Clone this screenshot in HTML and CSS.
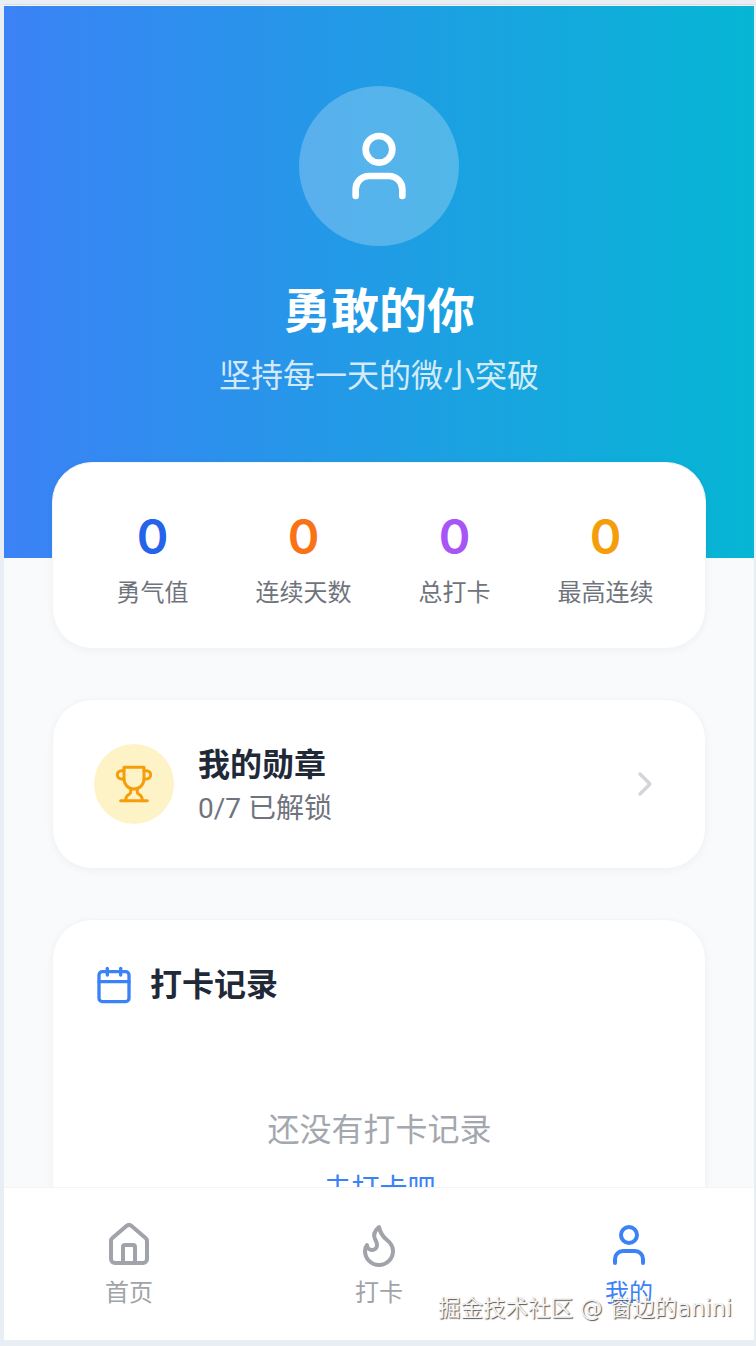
FILE: index.html
```html
<!DOCTYPE html>
<html lang="zh-CN">
<head>
    <meta charset="UTF-8">
    <meta name="viewport" content="width=device-width, initial-scale=1.0">
    <title>我的</title>
    <link rel="stylesheet" href="styles.css">
</head>
<body>
    <div class="phone">
        <div class="scroll">
            <!-- Header -->
            <header class="hero">
                <div class="avatar">
                    <svg class="icon" width="80" height="80" viewBox="0 0 24 24"><path d="M19 21v-2a4 4 0 0 0-4-4H9a4 4 0 0 0-4 4v2"/><circle cx="12" cy="7" r="4"/></svg>
                </div>
                <h1 class="hero-title">勇敢的你</h1>
                <p class="hero-sub">坚持每一天的微小突破</p>
            </header>

            <main class="cards">
                <!-- Stats -->
                <section class="card stats">
                    <div class="stat">
                        <div class="stat-num blue">0</div>
                        <div class="stat-label">勇气值</div>
                    </div>
                    <div class="stat">
                        <div class="stat-num orange">0</div>
                        <div class="stat-label">连续天数</div>
                    </div>
                    <div class="stat">
                        <div class="stat-num purple">0</div>
                        <div class="stat-label">总打卡</div>
                    </div>
                    <div class="stat">
                        <div class="stat-num amber">0</div>
                        <div class="stat-label">最高连续</div>
                    </div>
                </section>

                <!-- Medals -->
                <section class="card medals">
                    <div class="medal-icon">
                        <svg class="icon trophy" width="40" height="40" viewBox="0 0 24 24"><path d="M6 9H4.5a2.5 2.5 0 0 1 0-5H6"/><path d="M18 9h1.5a2.5 2.5 0 0 0 0-5H18"/><path d="M4 22h16"/><path d="M10 14.66V17c0 .55-.47.98-.97 1.21C7.85 18.75 7 20.24 7 22"/><path d="M14 14.66V17c0 .55.47.98.97 1.21C16.15 18.75 17 20.24 17 22"/><path d="M18 2H6v7a6 6 0 0 0 12 0V2Z"/></svg>
                    </div>
                    <div class="medal-text">
                        <div class="medal-title">我的勋章</div>
                        <div class="medal-sub">0/7 已解锁</div>
                    </div>
                    <svg class="icon chevron" width="40" height="40" viewBox="0 0 24 24"><path d="m9 18 6-6-6-6"/></svg>
                </section>

                <!-- Records -->
                <section class="card records">
                    <div class="records-head">
                        <svg class="icon calendar" width="40" height="40" viewBox="0 0 24 24"><path d="M8 2v4"/><path d="M16 2v4"/><rect x="3" y="4" width="18" height="18" rx="2"/><path d="M3 10h18"/></svg>
                        <h2 class="records-title">打卡记录</h2>
                    </div>
                    <div class="empty">
                        <p class="empty-text">还没有打卡记录</p>
                        <a class="empty-link" href="#">去打卡吧</a>
                    </div>
                </section>
            </main>
        </div>

        <!-- Bottom nav -->
        <nav class="tabbar">
            <a class="tab" href="#">
                <svg class="icon" width="48" height="48" viewBox="0 0 24 24"><path d="M15 21v-8a1 1 0 0 0-1-1h-4a1 1 0 0 0-1 1v8"/><path d="M3 10a2 2 0 0 1 .709-1.528l7-5.999a2 2 0 0 1 2.582 0l7 5.999A2 2 0 0 1 21 10v9a2 2 0 0 1-2 2H5a2 2 0 0 1-2-2z"/></svg>
                <span>首页</span>
            </a>
            <a class="tab" href="#">
                <svg class="icon" width="48" height="48" viewBox="0 0 24 24"><path d="M8.5 14.5A2.5 2.5 0 0 0 11 12c0-1.38-.5-2-1-3-1.072-2.143-.224-4.054 2-6 .5 2.5 2 4.9 4 6.5 2 1.6 3 3.5 3 5.5a7 7 0 1 1-14 0c0-1.153.433-2.294 1-3a2.5 2.5 0 0 0 2.5 2.5z"/></svg>
                <span>打卡</span>
            </a>
            <a class="tab active" href="#">
                <svg class="icon" width="48" height="48" viewBox="0 0 24 24"><path d="M19 21v-2a4 4 0 0 0-4-4H9a4 4 0 0 0-4 4v2"/><circle cx="12" cy="7" r="4"/></svg>
                <span>我的</span>
            </a>
        </nav>

        <div class="watermark">掘金技术社区 @ 窗边的anini</div>
    </div>
</body>
</html>
```

FILE: styles.css
```css
html, body {
    margin: 0;
    padding: 0;
    height: 100%;
    font-family: Roboto, "Noto Sans CJK SC", sans-serif;
    background: #e9edf4;
}

p, h1, h2 {
    margin: 0;
}

a {
    text-decoration: none;
}

.icon {
    fill: none;
    stroke: currentColor;
    stroke-width: 2;
    stroke-linecap: round;
    stroke-linejoin: round;
    display: block;
}

/* Phone frame */
.phone {
    position: relative;
    box-sizing: border-box;
    display: flex;
    flex-direction: column;
    width: 750px;
    height: 1334px;
    margin: 6px 2px 6px 4px;
    background: #f9fafc;
    overflow: hidden;
    box-shadow: 0 -1px 0 #f4f5f7, 0 -2px 0 #d9dce2;
}

.scroll {
    flex: 1;
    min-height: 0;
    overflow: hidden;
}

/* Header */
.hero {
    box-sizing: border-box;
    height: 552px;
    padding-top: 80px;
    display: flex;
    flex-direction: column;
    align-items: center;
    color: #fff;
    background: linear-gradient(90deg, #3b82f6, #06b6d4);
}

.avatar {
    width: 160px;
    height: 160px;
    border-radius: 50%;
    background: rgba(255, 255, 255, 0.24);
    display: flex;
    align-items: center;
    justify-content: center;
}

.hero-title {
    margin-top: 34px;
    font-size: 48px;
    line-height: 64px;
    font-weight: 600;
}

.hero-sub {
    margin-top: 8px;
    font-size: 32px;
    line-height: 48px;
    opacity: 0.8;
}

/* Cards */
.cards {
    margin-top: -96px;
    padding: 0 48px;
    display: flex;
    flex-direction: column;
    gap: 50px;
}

.card {
    background: #fff;
    border: 1px solid #f3f4f6;
    border-radius: 40px;
    box-shadow: 0 2px 8px rgba(0, 0, 0, 0.04);
}

.stats {
    display: grid;
    grid-template-columns: repeat(4, 1fr);
    height: 187px;
    box-sizing: border-box;
    padding: 42px 24px 0;
}

.stat {
    text-align: center;
}

.stat-num {
    font-family: Inter, sans-serif;
    font-size: 48px;
    line-height: 64px;
    font-weight: 600;
}

.stat-label {
    margin-top: 6px;
    font-size: 24px;
    line-height: 36px;
    color: #6f747c;
}

.blue { color: #2563eb; }
.orange { color: #f97316; }
.purple { color: #a855f7; }
.amber { color: #f59e0b; }

.medals {
    display: flex;
    align-items: center;
    gap: 24px;
    height: 170px;
    box-sizing: border-box;
    padding: 0 40px 0 41px;
}

.medal-icon {
    width: 80px;
    height: 80px;
    border-radius: 50%;
    background: #fef3c7;
    color: #f59e0b;
    display: flex;
    align-items: center;
    justify-content: center;
}

.trophy {
    stroke-width: 1.8;
}

.medal-text {
    flex: 1;
    padding-top: 4px;
}

.medal-title {
    font-size: 32px;
    line-height: 44px;
    font-weight: 600;
    color: #1f2937;
}

.medal-sub {
    margin-top: 2px;
    font-size: 28px;
    line-height: 40px;
    color: #6f747c;
}

.chevron {
    color: #d1d5db;
}

.records {
    padding: 41px 40px 40px 41px;
    height: 600px;
    box-sizing: border-box;
}

.records-head {
    display: flex;
    align-items: center;
    gap: 16px;
}

.calendar {
    color: #3b82f6;
}

.records-title {
    font-size: 32px;
    line-height: 48px;
    font-weight: 600;
    color: #1f2937;
}

.empty {
    margin-top: 97px;
    text-align: center;
}

.empty-text {
    font-size: 32px;
    line-height: 48px;
    color: #a3a7ae;
}

.empty-link {
    display: block;
    margin-top: 16px;
    font-size: 28px;
    line-height: 40px;
    color: #3b82f6;
}

/* Bottom nav */
.tabbar {
    flex: none;
    height: 153px;
    box-sizing: border-box;
    display: grid;
    grid-template-columns: repeat(3, 1fr);
    padding-top: 33px;
    background: #fff;
    border-top: 1px solid #f3f4f6;
}

.tab {
    display: flex;
    flex-direction: column;
    align-items: center;
    gap: 6px;
    font-size: 24px;
    line-height: 36px;
    color: #a0a3a9;
}

.tab.active {
    color: #3b82f6;
}

/* Site watermark over the nav */
.watermark {
    position: absolute;
    right: 22px;
    bottom: 14px;
    font-family: "DejaVu Sans", "Noto Sans CJK SC", sans-serif;
    font-size: 22.5px;
    line-height: 36px;
    color: #f4f4f4;
    text-shadow: 1px 1px 1px #555;
}
```
